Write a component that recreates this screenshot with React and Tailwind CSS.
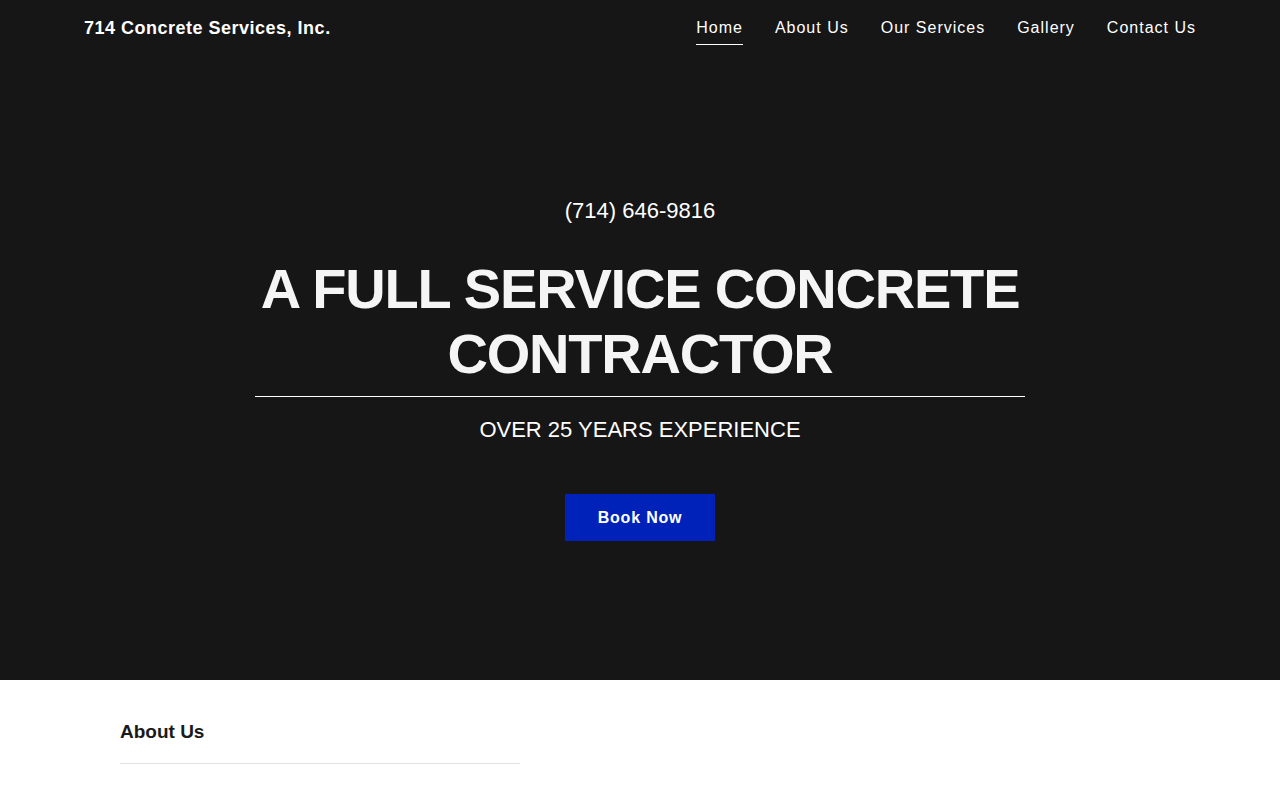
const navLinks = ['Home', 'About Us', 'Our Services', 'Gallery', 'Contact Us'];

function Header() {
  return (
    <header className="flex items-center justify-between h-[55px] pl-[84px] pr-[84px]">
      <a className="text-white font-bold text-[18px] tracking-[0.5px] pt-[1px]">714 Concrete Services, Inc.</a>
      <nav className="flex items-center gap-[32px]">
        {navLinks.map((link, i) => (
          <a
            key={link}
            className={
              'text-white text-[16px] tracking-[1px] pt-[6px] pb-[4px] border-b ' +
              (i === 0 ? 'border-white' : 'border-transparent')
            }
          >
            {link}
          </a>
        ))}
      </nav>
    </header>
  );
}

function Hero() {
  return (
    <section className="flex flex-col items-center text-center pt-[143px] h-[625px]">
      <p className="text-white text-[22px] leading-[26px]">(714) 646-9816</p>
      <h1 className="mt-[32px] text-[#f5f5f5] font-bold text-[56px] leading-[65px] tracking-[-1.2px] w-[770px]">
        A FULL SERVICE CONCRETE CONTRACTOR
      </h1>
      <div className="mt-[10px] w-[770px] h-px bg-white"></div>
      <p className="mt-[20px] text-white text-[22px] leading-[26px]">OVER 25 YEARS EXPERIENCE</p>
      <button className="mt-[51px] w-[150px] h-[47px] bg-[#0022b9] text-white font-bold text-[16px] tracking-[0.8px]">
        Book Now
      </button>
    </section>
  );
}

function About() {
  return (
    <section className="bg-white px-[120px] pt-[40px]">
      <h2 className="text-[#1a1a1a] font-bold text-[19px] leading-[24px]">About Us</h2>
      <div className="mt-[19px] w-[400px] h-px bg-[#e2e2e2]"></div>
      <div className="h-[200px]"></div>
    </section>
  );
}

export default function App() {
  return (
    <div className="min-h-screen bg-white" style={{ fontFamily: '"Liberation Sans", Arial, sans-serif' }}>
      <div className="bg-[#161616]">
        <Header />
        <Hero />
      </div>
      <About />
    </div>
  );
}
